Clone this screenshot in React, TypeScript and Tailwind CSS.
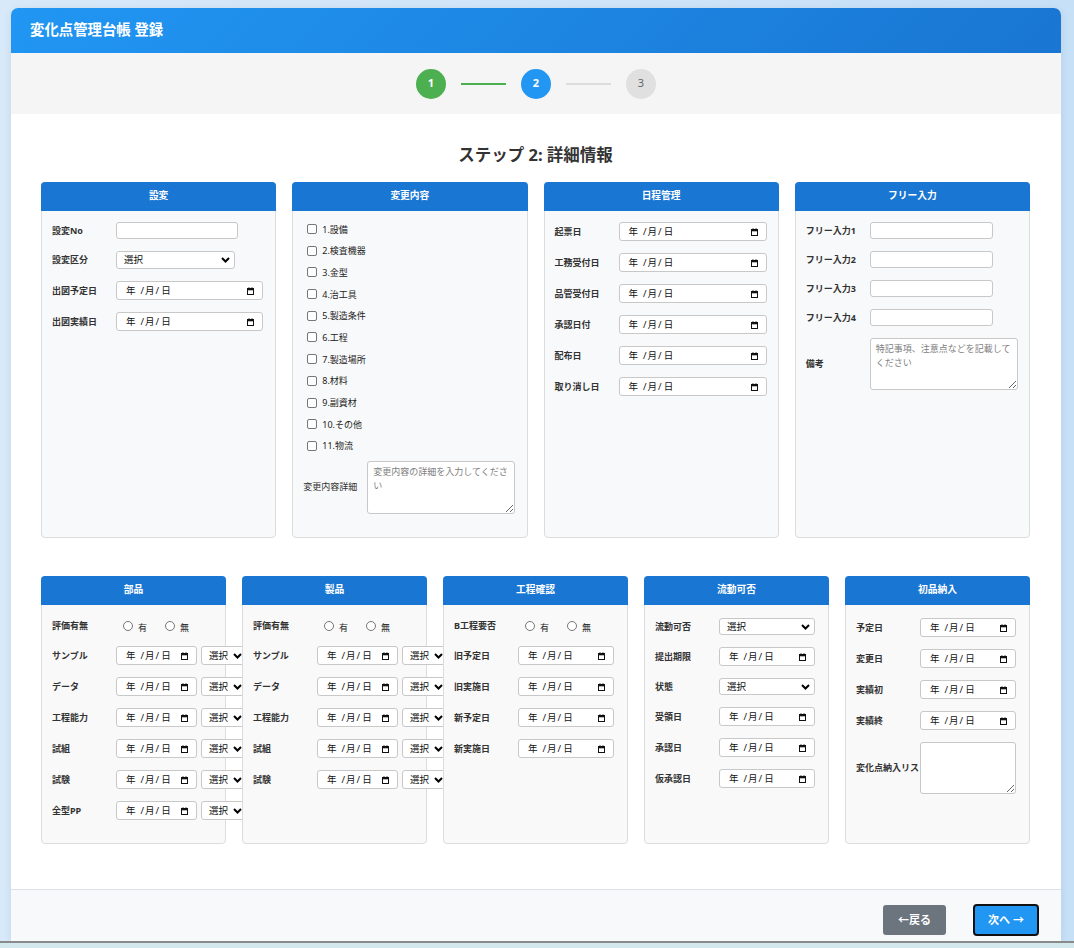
import React from "react";

const CalIcon = () => (
  <svg width="7" height="8" viewBox="0 0 7 8" className="shrink-0">
    <rect x="0.5" y="1.5" width="6" height="6" fill="none" stroke="#111" strokeWidth="1" />
    <rect x="0.5" y="1.5" width="6" height="1.8" fill="#111" />
    <rect x="1.5" y="0.3" width="1" height="1.4" fill="#111" />
    <rect x="4.5" y="0.3" width="1" height="1.4" fill="#111" />
  </svg>
);

const Chevron = () => (
  <svg width="9" height="6" viewBox="0 0 9 6" className="shrink-0">
    <polyline points="1,1 4.5,4.5 8,1" fill="none" stroke="#000" strokeWidth="2" />
  </svg>
);

function DateBox({ cls }: { cls: string }) {
  return (
    <div
      className={`shrink-0 flex items-center justify-between bg-white border border-[#c8c8c8] rounded-[3px] pl-[9px] pr-[8px] text-[9.5px] leading-none text-[#111] ${cls}`}
    >
      <span className="flex items-center">
        <span>年</span>
        <span className="ml-[5px]">/</span>
        <span className="ml-[1px]">月</span>
        <span className="ml-[1px]">/</span>
        <span className="ml-[2px]">日</span>
      </span>
      <CalIcon />
    </div>
  );
}

function SelectBox({ cls }: { cls: string }) {
  return (
    <div
      className={`shrink-0 flex items-center justify-between bg-white border border-[#c8c8c8] rounded-[3px] pl-[7px] pr-[4px] text-[9.5px] leading-none text-[#111] ${cls}`}
    >
      <span>選択</span>
      <Chevron />
    </div>
  );
}

function TextBox({ cls }: { cls: string }) {
  return (
    <input
      type="text"
      className={`shrink-0 bg-white border border-[#c8c8c8] rounded-[3px] outline-none ${cls}`}
    />
  );
}

function Area({ cls, ph }: { cls: string; ph?: string }) {
  return (
    <textarea
      placeholder={ph}
      className={`shrink-0 bg-white border border-[#c8c8c8] rounded-[3px] px-[5px] py-[3px] text-[9px] leading-[14px] text-[#333] placeholder:text-[#808080] outline-none resize ${cls}`}
    />
  );
}

function Label({ children, normal }: { children: React.ReactNode; normal?: boolean }) {
  return (
    <div
      className={`w-[64px] shrink-0 text-[9px] leading-[12px] text-[#333] whitespace-nowrap ${
        normal ? "font-normal" : "font-bold"
      }`}
    >
      {children}
    </div>
  );
}

function Row({ label, children, normal }: { label: string; children: React.ReactNode; normal?: boolean }) {
  return (
    <div className="flex items-center mb-[12px]">
      <Label normal={normal}>{label}</Label>
      {children}
    </div>
  );
}

function Radio({ text, first }: { text: string; first?: boolean }) {
  return (
    <div className={`flex items-center ${first ? "ml-[7px]" : "ml-[18px]"}`}>
      <div className="w-[10px] h-[10px] rounded-full border border-[#767676] bg-white" />
      <span className="ml-[5px] mt-[2px] text-[9px] leading-none text-[#222]">{text}</span>
    </div>
  );
}

function RadioRow({ label }: { label: string }) {
  return (
    <div className="flex items-center h-[16px] mb-[12px]">
      <Label>{label}</Label>
      <Radio text="有" first />
      <Radio text="無" />
    </div>
  );
}

function Card({
  title,
  children,
  row2,
}: {
  title: string;
  children: React.ReactNode;
  row2?: boolean;
}) {
  return (
    <div
      className={`flex flex-col border border-[#dcdcdc] rounded-[4px] ${
        row2 ? "bg-[#f9f9f9]" : "bg-[#f8f9fa]"
      }`}
    >
      <div className="h-[29px] -mx-px -mt-px bg-[#1976d2] rounded-t-[4px] flex items-center justify-center text-white text-[9.75px] font-bold shrink-0">
        {title}
      </div>
      <div className={`px-[10px] pb-[11px] ${row2 ? "pt-[13px]" : "pt-[11px]"}`}>{children}</div>
    </div>
  );
}

const checks = [
  "1.設備",
  "2.検査機器",
  "3.金型",
  "4.治工具",
  "5.製造条件",
  "6.工程",
  "7.製造場所",
  "8.材料",
  "9.副資材",
  "10.その他",
  "11.物流",
];

export default function App() {
  return (
    <div className="h-[948px] overflow-hidden flex flex-col bg-[linear-gradient(90deg,#d8e9f9,#c6e0f8)] [font-family:'Noto_Sans','Noto_Sans_CJK_JP',sans-serif]">
      <div className="flex-1 min-h-0 overflow-hidden pt-[8px] pl-[11px]">
        <div className="w-[1050px] bg-white rounded-t-[7px] overflow-hidden shadow-[0_2px_10px_rgba(0,0,0,0.08)]">
          {/* Header */}
          <div className="h-[45px] flex items-center pl-[19px] bg-[linear-gradient(135deg,#2196f3,#1976d2)]">
            <h1 className="text-white text-[14.4px] font-bold leading-none">変化点管理台帳 登録</h1>
          </div>

          {/* Stepper */}
          <div className="h-[61px] bg-[#f5f5f5] flex items-center justify-center">
            <div className="w-[30px] h-[30px] rounded-full bg-[#4caf50] flex items-center justify-center text-white text-[11px] font-bold">
              1
            </div>
            <div className="w-[45px] h-[2px] mx-[15px] bg-[#4caf50]" />
            <div className="w-[30px] h-[30px] rounded-full bg-[#2196f3] flex items-center justify-center text-white text-[11px] font-bold">
              2
            </div>
            <div className="w-[45px] h-[2px] mx-[15px] bg-[#dddddd]" />
            <div className="w-[30px] h-[30px] rounded-full bg-[#e0e0e0] flex items-center justify-center text-[#666] text-[11px]">
              3
            </div>
          </div>

          {/* Content */}
          <div className="pt-[30px] pb-[46px] pl-[30px] pr-[31px]">
            <h2 className="text-center text-[16.5px] leading-[22px] font-bold text-[#333] mb-[16px]">
              ステップ 2: 詳細情報
            </h2>

            <div className="grid grid-cols-4 gap-4 h-[356px]">
              <Card title="設変">
                <Row label="設変No">
                  <TextBox cls="w-[122px] h-[17px]" />
                </Row>
                <Row label="設変区分">
                  <SelectBox cls="w-[119px] h-[18px]" />
                </Row>
                <Row label="出図予定日">
                  <DateBox cls="w-[147px] h-[19px]" />
                </Row>
                <Row label="出図実績日">
                  <DateBox cls="w-[147px] h-[19px]" />
                </Row>
              </Card>

              <Card title="変更内容">
                <div className="flex flex-col gap-[7.7px]">
                  {checks.map((c) => (
                    <div key={c} className="flex items-center h-[14px] pl-[4px]">
                      <div className="w-[10px] h-[10px] rounded-[2px] border border-[#767676] bg-white shrink-0" />
                      <span className="ml-[5px] text-[9px] leading-none text-[#222]">{c}</span>
                    </div>
                  ))}
                </div>
                <div className="flex items-center mt-[8px] mb-[12px]">
                  <Label normal>変更内容詳細</Label>
                  <Area cls="w-[148px] h-[53px]" ph="変更内容の詳細を入力してください" />
                </div>
              </Card>

              <Card title="日程管理">
                {["起票日", "工務受付日", "品管受付日", "承認日付", "配布日", "取り消し日"].map((l) => (
                  <Row key={l} label={l}>
                    <DateBox cls="w-[148px] h-[19px]" />
                  </Row>
                ))}
              </Card>

              <Card title="フリー入力">
                {["フリー入力1", "フリー入力2", "フリー入力3", "フリー入力4"].map((l) => (
                  <Row key={l} label={l}>
                    <TextBox cls="w-[123px] h-[17px]" />
                  </Row>
                ))}
                <Row label="備考">
                  <Area cls="w-[148px] h-[52px]" ph="特記事項、注意点などを記載してください" />
                </Row>
              </Card>
            </div>

            <div className="grid grid-cols-5 gap-4 h-[267px] mt-[38px]">
              <Card title="部品" row2>
                <RadioRow label="評価有無" />
                {["サンプル", "データ", "工程能力", "試組", "試験", "全型PP"].map((l) => (
                  <Row key={l} label={l}>
                    <DateBox cls="w-[81px] h-[19px]" />
                    <SelectBox cls="w-[46px] h-[19px] ml-[4px]" />
                  </Row>
                ))}
              </Card>

              <Card title="製品" row2>
                <RadioRow label="評価有無" />
                {["サンプル", "データ", "工程能力", "試組", "試験"].map((l) => (
                  <Row key={l} label={l}>
                    <DateBox cls="w-[81px] h-[19px]" />
                    <SelectBox cls="w-[46px] h-[19px] ml-[4px]" />
                  </Row>
                ))}
              </Card>

              <Card title="工程確認" row2>
                <RadioRow label="B工程要否" />
                {["旧予定日", "旧実施日", "新予定日", "新実施日"].map((l) => (
                  <Row key={l} label={l}>
                    <DateBox cls="w-[96px] h-[19px]" />
                  </Row>
                ))}
              </Card>

              <Card title="流動可否" row2>
                <Row label="流動可否">
                  <SelectBox cls="w-[96px] h-[17px]" />
                </Row>
                <Row label="提出期限">
                  <DateBox cls="w-[96px] h-[19px]" />
                </Row>
                <Row label="状態">
                  <SelectBox cls="w-[96px] h-[17px]" />
                </Row>
                {["受領日", "承認日", "仮承認日"].map((l) => (
                  <Row key={l} label={l}>
                    <DateBox cls="w-[96px] h-[19px]" />
                  </Row>
                ))}
              </Card>

              <Card title="初品納入" row2>
                {["予定日", "変更日", "実績初", "実績終"].map((l) => (
                  <Row key={l} label={l}>
                    <DateBox cls="w-[96px] h-[19px]" />
                  </Row>
                ))}
                <Row label="変化点納入リス">
                  <Area cls="w-[96px] h-[52px]" />
                </Row>
              </Card>
            </div>
          </div>

          {/* Footer */}
          <div className="h-[52px] border-t border-[#dee2e6] bg-[#f8f9fa] flex justify-end items-start pt-[14px] pr-[22px]">
            <button className="w-[63px] h-[30px] mt-[1px] rounded-[3px] bg-[#6c757d] text-white text-[11px] font-bold flex items-center justify-center">
              ←戻る
            </button>
            <button className="w-[66px] h-[32px] ml-[27px] rounded-[4px] bg-[#2196f3] border-2 border-[#111] text-white text-[11px] font-bold flex items-center justify-center">
              次へ →
            </button>
          </div>
        </div>
      </div>
      <div className="h-[7px] shrink-0 border-t-2 border-[#8a8a8a] bg-[#d2e8ec]" />
    </div>
  );
}
